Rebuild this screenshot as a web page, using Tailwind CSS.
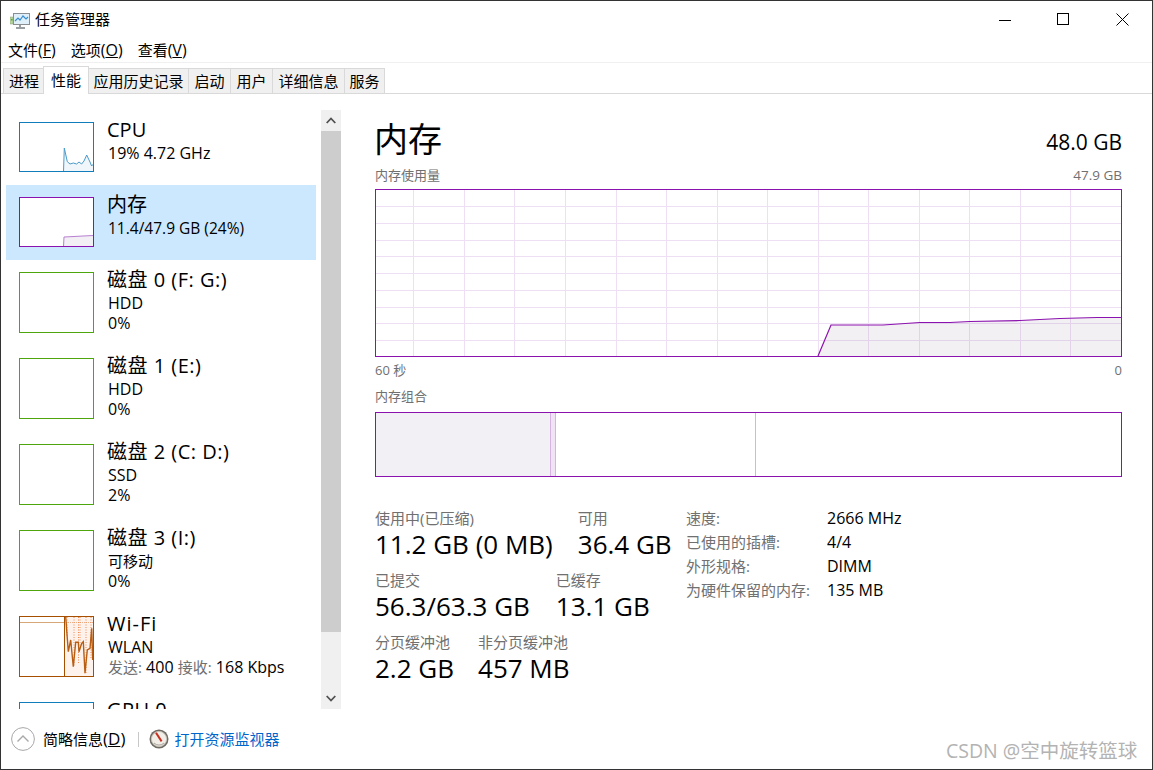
<!DOCTYPE html>
<html lang="zh-CN">
<head>
    <meta charset="UTF-8">
    <title>任务管理器</title>
    <script src="https://cdn.jsdelivr.net/npm/@tailwindcss/browser@4"></script>
</head>
<body class="bg-white">
<div class="relative w-[1153px] h-[770px] overflow-hidden bg-white text-black text-[15px] border border-[#333333] flex flex-col font-['Open_Sans','Noto_Sans_CJK_SC',sans-serif]">

    <!-- Title bar -->
    <div class="h-[39px] flex items-center shrink-0">
        <svg class="ml-[9px] w-[20px] h-[18px] mt-px" viewBox="0 0 20 18">
            <rect x="3.5" y="1.5" width="16" height="11" fill="#dff0fa" stroke="#8a8f94"/>
            <path d="M5 9 L8 6 L10 8 L13 4 L16 7 L18 5" fill="none" stroke="#3a8fd0" stroke-width="1.2"/>
            <rect x="0" y="5" width="3" height="7" fill="#b8d89a" stroke="#8a9a80" stroke-width=".5"/>
            <rect x="1" y="7" width="1.5" height="1.5" fill="#4cae2c"/>
            <path d="M10 13 V15 M6 16 H15" stroke="#9a9fa4" stroke-width="2"/>
        </svg>
        <span class="ml-[5px] leading-5 -mt-[3px]">任务管理器</span>
        <div class="ml-auto flex items-center mr-[23px] -mt-[2px]">
            <svg class="w-[12px] h-[12px]" viewBox="0 0 12 12"><path d="M0 6.5 H12" stroke="#000"/></svg>
            <svg class="ml-[46px] w-[13px] h-[13px]" viewBox="0 0 13 13"><rect x=".5" y=".5" width="11" height="11" fill="none" stroke="#000"/></svg>
            <svg class="ml-[46px] w-[13px] h-[13px]" viewBox="0 0 13 13"><path d="M.5 .5 L12.5 12.5 M12.5 .5 L.5 12.5" stroke="#000"/></svg>
        </div>
    </div>

    <!-- Menu -->
    <div class="h-[23px] shrink-0 flex items-center pl-[7px] gap-[15px] border-b border-[#f0f0f0] pb-[2px]">
        <span>文件<span class="text-[16px]">(<span class="underline">F</span>)</span></span>
        <span>选项<span class="text-[16px]">(<span class="underline">O</span>)</span></span>
        <span>查看<span class="text-[16px]">(<span class="underline">V</span>)</span></span>
    </div>

    <!-- Tabs -->
    <div class="h-[31px] shrink-0 flex items-end pl-[2px] border-b border-[#d9d9d9]">
        <div class="w-[41px] h-[25px] flex items-center justify-center bg-[#f0f0f0] border-t border-l border-[#d9d9d9]">进程</div>
        <div class="w-[46px] h-[28px] -mb-px -ml-px pb-px flex items-center justify-center bg-white border-t border-x border-[#d9d9d9] relative">性能</div>
        <div class="w-[100px] h-[25px] flex items-center justify-center bg-[#f0f0f0] border-t border-r border-[#d9d9d9]">应用历史记录</div>
        <div class="w-[42px] h-[25px] flex items-center justify-center bg-[#f0f0f0] border-t border-r border-[#d9d9d9]">启动</div>
        <div class="w-[42px] h-[25px] flex items-center justify-center bg-[#f0f0f0] border-t border-r border-[#d9d9d9]">用户</div>
        <div class="w-[72px] h-[25px] flex items-center justify-center bg-[#f0f0f0] border-t border-r border-[#d9d9d9]">详细信息</div>
        <div class="w-[40px] h-[25px] flex items-center justify-center bg-[#f0f0f0] border-t border-r border-[#d9d9d9]">服务</div>
    </div>

    <!-- Content -->
    <div class="flex-1 flex min-h-0">
        <!-- Left list -->
        <div class="w-[340px] shrink-0 pt-[16px] flex">
            <div class="ml-[5px] w-[310px] h-[599px] overflow-hidden">
                <div class="h-[75px] flex pt-[12px]">
                    <svg class="ml-[13px] w-[75px] h-[50px] shrink-0" viewBox="0 0 75 50">
                        <path d="M44.5 49.5 L45.3 26 L48.3 39.7 L51 42 L54.3 41 L57.6 42 L60 40 L62.6 42 L65 39 L67.7 33 L71 40 L72.6 44 L74.5 42 V49.5 Z" fill="#f1f6fb"/>
                        <path d="M44.5 49.5 L45.3 26 L48.3 39.7 L51 42 L54.3 41 L57.6 42 L60 40 L62.6 42 L65 39 L67.7 33 L71 40 L72.6 44 L74.5 42" fill="none" stroke="#4a9bc9"/>
                        <rect x=".5" y=".5" width="74" height="49" fill="none" stroke="#117dbb"/>
                    </svg>
                    <div class="ml-[13px] -mt-[4px]">
                        <div class="text-[20px] leading-6">CPU</div>
                        <div class="mt-px leading-5 pl-px text-[16px]">19% 4.72 GHz</div>
                    </div>
                </div>
                <div class="h-[75px] flex pt-[12px] bg-[#cce8ff]">
                    <svg class="ml-[13px] w-[75px] h-[50px] shrink-0" viewBox="0 0 75 50">
                        <rect width="75" height="50" fill="#fff"/>
                        <path d="M44.5 49.5 L45 40 L55 39.5 L64 39 L74.5 38.5 V49.5 Z" fill="#f2eff5" stroke="#b87fd0"/>
                        <rect x=".5" y=".5" width="74" height="49" fill="none" stroke="#8b12ae"/>
                    </svg>
                    <div class="ml-[13px] -mt-[4px]">
                        <div class="text-[20px] leading-6">内存</div>
                        <div class="mt-px leading-5 pl-px text-[15.5px]">11.4/47.9 GB (24%)</div>
                    </div>
                </div>
                <div class="h-[86px] flex pt-[12px]">
                    <div class="ml-[13px] w-[75px] h-[61px] shrink-0 border border-[#4da60c]"></div>
                    <div class="ml-[13px] -mt-[4px]">
                        <div class="text-[20px] leading-6 tracking-[0.5px]">磁盘 0 (F: G:)</div>
                        <div class="mt-px leading-5 pl-px text-[16px]">HDD</div>
                        <div class="leading-5 pl-px text-[16px]">0%</div>
                    </div>
                </div>
                <div class="h-[86px] flex pt-[12px]">
                    <div class="ml-[13px] w-[75px] h-[61px] shrink-0 border border-[#4da60c]"></div>
                    <div class="ml-[13px] -mt-[4px]">
                        <div class="text-[20px] leading-6 tracking-[0.5px]">磁盘 1 (E:)</div>
                        <div class="mt-px leading-5 pl-px text-[16px]">HDD</div>
                        <div class="leading-5 pl-px text-[16px]">0%</div>
                    </div>
                </div>
                <div class="h-[86px] flex pt-[12px]">
                    <div class="ml-[13px] w-[75px] h-[61px] shrink-0 border border-[#4da60c]"></div>
                    <div class="ml-[13px] -mt-[4px]">
                        <div class="text-[20px] leading-6 tracking-[0.5px]">磁盘 2 (C: D:)</div>
                        <div class="mt-px leading-5 pl-px text-[16px]">SSD</div>
                        <div class="leading-5 pl-px text-[16px]">2%</div>
                    </div>
                </div>
                <div class="h-[86px] flex pt-[12px]">
                    <div class="ml-[13px] w-[75px] h-[61px] shrink-0 border border-[#4da60c]"></div>
                    <div class="ml-[13px] -mt-[4px]">
                        <div class="text-[20px] leading-6 tracking-[0.5px]">磁盘 3 (I:)</div>
                        <div class="mt-px leading-5 pl-px">可移动</div>
                        <div class="leading-5 pl-px text-[16px]">0%</div>
                    </div>
                </div>
                <div class="h-[86px] flex pt-[12px]">
                    <svg class="ml-[13px] w-[75px] h-[61px] shrink-0" viewBox="0 0 75 61">
                        <rect x="45" y="0" width="30" height="61" fill="#fdf3ec"/>
                        <path d="M1 6.5 H45" stroke="#d8a778"/>
                        <path d="M45 6.5 H74" stroke="#e9b08a" stroke-dasharray="1 1"/>
                        <path d="M55 1 V50 M59.5 1 V48 M61 1 V30 M67 1 V58 M72 1 V42 M48 1 V20" stroke="#f08a50" stroke-dasharray="1 1.5" fill="none"/>
                        <path d="M46.7 .7 L49.3 35.7 L51.7 24 L54.3 50.7 L56.7 26.3 L59.3 26.3 L60 35.7 L62.7 27.3 L64.3 25.7 L66 57.3 L68.3 34 L71 32.3 L72.7 12.3 L73.7 44" fill="none" stroke="#b85d12" stroke-width="1.4"/>
                        <path d="M45.5 1 V61" stroke="#a74f01"/>
                        <rect x=".5" y=".5" width="74" height="60" fill="none" stroke="#a74f01"/>
                    </svg>
                    <div class="ml-[13px] -mt-[4px]">
                        <div class="text-[20px] leading-6 tracking-[1px]">Wi-Fi</div>
                        <div class="mt-px leading-5 pl-px text-[16px]">WLAN</div>
                        <div class="leading-5 pl-px text-[16px] whitespace-nowrap"><span class="text-[15px] text-[#707070]">发送:</span> 400 <span class="text-[15px] text-[#707070]">接收:</span> 168 Kbps</div>
                    </div>
                </div>
                <div class="h-[86px] flex pt-[12px]">
                    <div class="ml-[13px] w-[75px] h-[61px] shrink-0 border border-[#117dbb]"></div>
                    <div class="ml-[13px] -mt-[4px]">
                        <div class="text-[20px] leading-6 tracking-[0.5px]">GPU 0</div>
                    </div>
                </div>
            </div>
            <!-- Scrollbar -->
            <div class="ml-[5px] w-[20px] h-[599px] bg-[#f0f0f0] flex flex-col shrink-0">
                <div class="h-[21px] flex items-center justify-center">
                    <svg class="w-[10px] h-[7px]" viewBox="0 0 10 7"><path d="M.7 6 L5 1.5 L9.3 6" fill="none" stroke="#505050" stroke-width="1.8"/></svg>
                </div>
                <div class="h-[501px] bg-[#cdcdcd]"></div>
                <div class="flex-1 flex items-end justify-center pb-[7px]">
                    <svg class="w-[10px] h-[7px]" viewBox="0 0 10 7"><path d="M.7 1 L5 5.5 L9.3 1" fill="none" stroke="#505050" stroke-width="1.8"/></svg>
                </div>
            </div>
        </div>

        <!-- Memory panel -->
        <div class="ml-[34px] w-[747px] shrink-0">
            <div class="pt-[25px] flex justify-between items-center h-[65px]">
                <div class="text-[34px] leading-10 -ml-px">内存</div>
                <div class="text-[21px] leading-6 mt-[6px]">48.0 GB</div>
            </div>
            <div class="mt-[7px] flex justify-between text-[13px] leading-[18px] text-[#707070]">
                <span>内存使用量</span>
                <span class="text-[13.5px]">47.9 GB</span>
            </div>
            <svg class="block mt-[5px] w-[747px] h-[168px]" viewBox="0 0 747 168" shape-rendering="crispEdges">
                <g stroke="#eedff5" fill="none">
                    <path d="M0 17.5 H747 M0 34.5 H747 M0 51.5 H747 M0 67.5 H747 M0 84.5 H747 M0 101.5 H747 M0 118.5 H747 M0 134.5 H747 M0 151.5 H747"/>
                    <path d="M38.5 0 V168 M89.5 0 V168 M139.5 0 V168 M190.5 0 V168 M241.5 0 V168 M291.5 0 V168 M342.5 0 V168 M392.5 0 V168 M443.5 0 V168 M493.5 0 V168 M544.5 0 V168 M594.5 0 V168 M645.5 0 V168 M695.5 0 V168"/>
                </g>
                <path d="M443 167 L456 136 L508 136 L545 133.5 L575 133.5 L595 132.5 L645 131.5 L685 129.5 L722 128.5 L747 128.5 V167 Z" fill="#7b6a8a" fill-opacity=".1" shape-rendering="auto"/>
                <path d="M443 167 L456 136 L508 136 L545 133.5 L575 133.5 L595 132.5 L645 131.5 L685 129.5 L722 128.5 L747 128.5" fill="none" stroke="#8b12ae" stroke-width="1.2" shape-rendering="auto"/>
                <rect x=".5" y=".5" width="746" height="167" fill="none" stroke="#8b12ae"/>
            </svg>
            <div class="mt-[4px] flex justify-between text-[13px] leading-[18px] text-[#707070]">
                <span>60 秒</span>
                <span>0</span>
            </div>
            <div class="mt-[8px] text-[13px] leading-[18px] text-[#707070]">内存组合</div>
            <div class="mt-[7px] h-[65px] border border-[#8b12ae] flex">
                <div class="w-[175px] bg-[#f2f0f4] border-r border-[#d3b5e0]"></div>
                <div class="w-[5px] bg-[#f0e4f4] border-r border-[#d3b5e0]"></div>
                <div class="w-[200px] border-r border-[#d3b5e0]"></div>
            </div>

            <div class="mt-[32px] flex">
                <!-- Stats -->
                <div class="w-[311px] shrink-0">
                    <div class="h-[62px] flex gap-[25px]">
                        <div>
                            <div class="leading-[18px] text-[#707070]">使用中(已压缩)</div>
                            <div class="mt-[2px] text-[26px] leading-[30px] whitespace-nowrap">11.2 GB (0 MB)</div>
                        </div>
                        <div>
                            <div class="leading-[18px] text-[#707070]">可用</div>
                            <div class="mt-[2px] text-[26px] leading-[30px] whitespace-nowrap">36.4 GB</div>
                        </div>
                    </div>
                    <div class="h-[62px] flex gap-[26px]">
                        <div>
                            <div class="leading-[18px] text-[#707070]">已提交</div>
                            <div class="mt-[2px] text-[26px] leading-[30px] whitespace-nowrap">56.3/63.3 GB</div>
                        </div>
                        <div>
                            <div class="leading-[18px] text-[#707070]">已缓存</div>
                            <div class="mt-[2px] text-[26px] leading-[30px] whitespace-nowrap">13.1 GB</div>
                        </div>
                    </div>
                    <div class="h-[62px] flex gap-[24px]">
                        <div>
                            <div class="leading-[18px] text-[#707070]">分页缓冲池</div>
                            <div class="mt-[2px] text-[26px] leading-[30px] whitespace-nowrap">2.2 GB</div>
                        </div>
                        <div>
                            <div class="leading-[18px] text-[#707070]">非分页缓冲池</div>
                            <div class="mt-[2px] text-[26px] leading-[30px] whitespace-nowrap">457 MB</div>
                        </div>
                    </div>
                </div>
                <!-- Hardware info -->
                <div class="-mt-[3px] grid grid-cols-[141px_auto] auto-rows-[24px] items-center h-[96px]">
                    <span class="text-[#707070]">速度:</span><span class="text-[16px]">2666 MHz</span>
                    <span class="text-[#707070]">已使用的插槽:</span><span class="text-[16px]">4/4</span>
                    <span class="text-[#707070]">外形规格:</span><span class="text-[16px]">DIMM</span>
                    <span class="text-[#707070]">为硬件保留的内存:</span><span class="text-[16px]">135 MB</span>
                </div>
            </div>
        </div>
    </div>

    <!-- Footer -->
    <div class="h-[60px] shrink-0 flex items-center pl-[10px]">
        <svg class="w-[24px] h-[24px]" viewBox="0 0 24 24">
            <circle cx="12" cy="12" r="11.4" fill="#fff" stroke="#a8a8a8"/>
            <path d="M6.5 14.5 L12 9 L17.5 14.5" fill="none" stroke="#a8a8a8" stroke-width="1.4"/>
        </svg>
        <span class="ml-[8px] leading-5">简略信息<span class="text-[17px]">(<span class="underline">D</span>)</span></span>
        <div class="ml-[13px] w-px h-[15px] bg-[#c8c8c8]"></div>
        <svg class="ml-[10px] w-[20px] h-[20px]" viewBox="0 0 20 20">
            <circle cx="10" cy="10" r="9.5" fill="#6f6a62"/>
            <circle cx="10" cy="10" r="7.6" fill="#f1eee8" stroke="#c9c4ba"/>
            <path d="M7 3.8 L12.6 12.4" stroke="#c9301f" stroke-width="2"/>
            <path d="M5 14 A7 7 0 0 0 15 14" fill="none" stroke="#a8a29a"/>
        </svg>
        <span class="ml-[5px] leading-5 text-[#0066cc]">打开资源监视器</span>
    </div>

    <!-- Watermark -->
    <div class="absolute left-[945px] top-[738px] text-[19.5px] leading-6 text-[#b3b3b3] whitespace-nowrap">CSDN @空中旋转篮球</div>
</div>
</body>
</html>
